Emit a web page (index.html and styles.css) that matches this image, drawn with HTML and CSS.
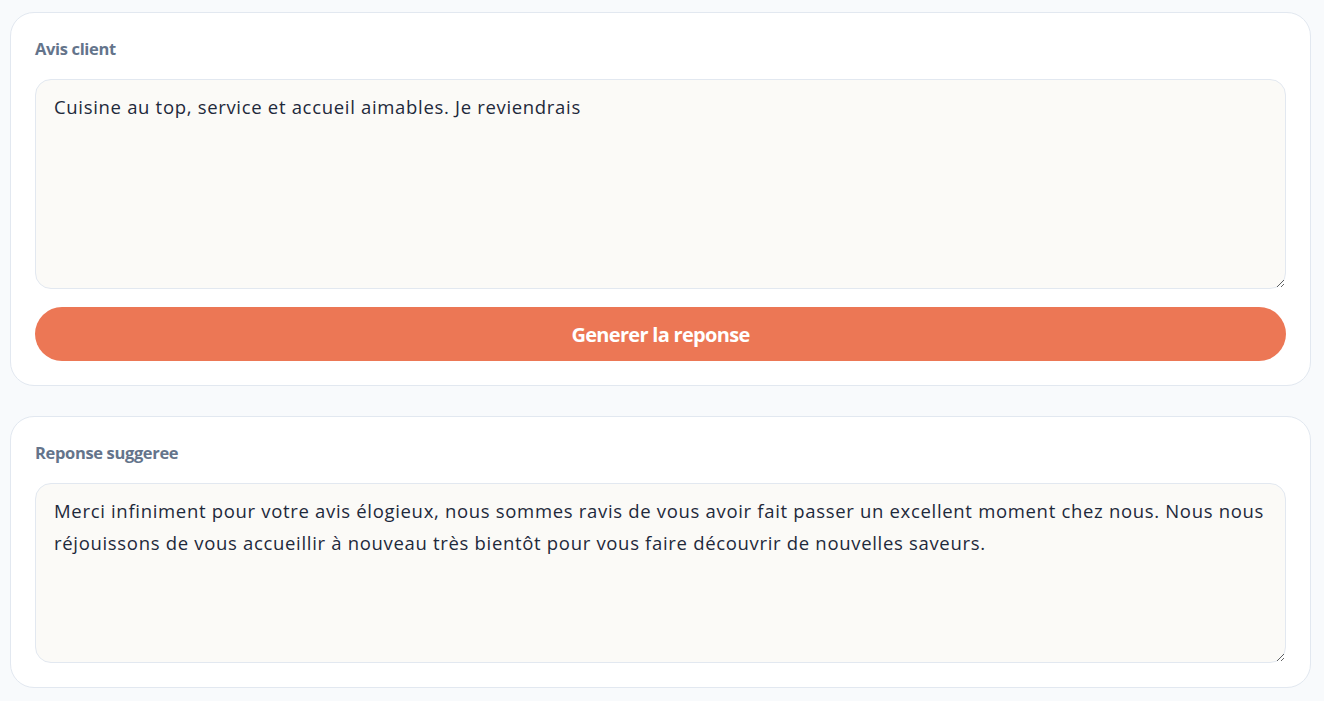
FILE: index.html
```html
<!DOCTYPE html>
<html lang="fr">
<head>
<meta charset="utf-8">
<title>Avis client</title>
<link rel="stylesheet" href="styles.css">
</head>
<body>
<main class="page">
  <section class="card">
    <label class="label" for="avis">Avis client</label>
    <textarea id="avis" class="field field-tall">Cuisine au top, service et accueil aimables. Je reviendrais</textarea>
    <button class="btn" type="button">Generer la reponse</button>
  </section>
  <section class="card">
    <label class="label" for="reponse">Reponse suggeree</label>
    <textarea id="reponse" class="field field-short">Merci infiniment pour votre avis élogieux, nous sommes ravis de vous avoir fait passer un excellent moment chez nous. Nous nous réjouissons de vous accueillir à nouveau très bientôt pour vous faire découvrir de nouvelles saveurs.</textarea>
  </section>
</main>
</body>
</html>
```
FILE: styles.css
```css
html, body {
  margin: 0;
  background: #f8fafc;
}
.page {
  display: flex;
  flex-direction: column;
  gap: 30px;
  padding: 12px 13px 13px 10px;
}
.card {
  display: flex;
  flex-direction: column;
  background: #ffffff;
  border: 1px solid #e2e8f0;
  border-radius: 24px;
  padding: 24px;
}
.label {
  display: block;
  font-family: "Open Sans", sans-serif;
  font-size: 16.5px;
  font-weight: 700;
  letter-spacing: -0.35px;
  line-height: 24px;
  color: #64748b;
  margin-bottom: 18px;
}
.field {
  display: block;
  box-sizing: border-box;
  width: 100%;
  margin: 0;
  font-family: "Open Sans", sans-serif;
  font-size: 18.5px;
  letter-spacing: 0.68px;
  line-height: 32px;
  color: #1e293b;
  background: #fbfaf7;
  border: 1px solid #e2e8f0;
  border-radius: 16px;
  padding: 11px 8px 13px 18px;
  outline: none;
}
.field-tall { height: 210px; }
.field-short { height: 180px; }
.btn {
  margin-top: 18px;
  height: 54px;
  border: none;
  border-radius: 999px;
  background: #ec7755;
  color: #ffffff;
  font-family: "Open Sans", sans-serif;
  font-size: 20px;
  font-weight: 700;
  letter-spacing: -0.7px;
  cursor: pointer;
}
```
